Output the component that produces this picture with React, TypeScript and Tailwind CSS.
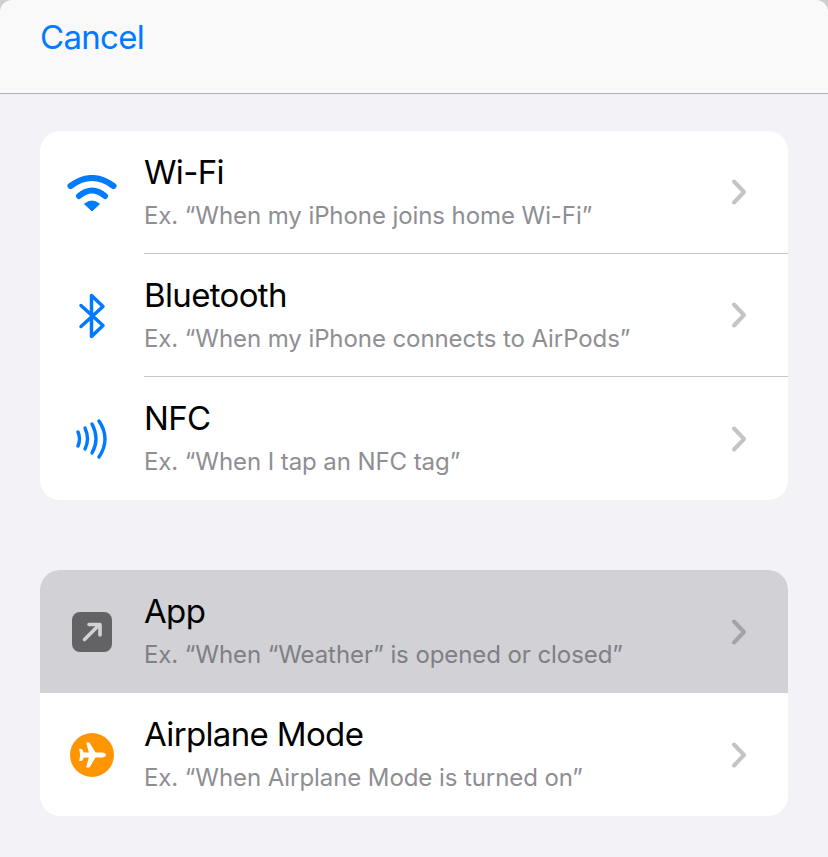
import type { ReactNode } from "react";

const sans = "font-['Inter','Liberation_Sans',sans-serif]";

function WifiIcon() {
  return (
    <svg width="50" height="36" viewBox="0 0 50 36" fill="none" className="block">
      <path d="M3.5 11Q25 -5 46.5 11" stroke="#007aff" strokeWidth="6" strokeLinecap="round" />
      <path d="M12 21Q25 10 38 21" stroke="#007aff" strokeWidth="6" strokeLinecap="round" />
      <path d="M25 36L17.5 29Q25 23 32.500 29Z" fill="#007aff" stroke="#007aff" strokeWidth="1" strokeLinejoin="round" />
    </svg>
  );
}

function BluetoothIcon() {
  return (
    <svg width="28" height="46" viewBox="0 0 28 46" fill="none" className="block">
      <path
        d="M3 33.500L25 13.500L13.500 2.500V43.500L25 32.500L3 12.500"
        stroke="#007aff"
        strokeWidth="3.5"
        strokeLinecap="round"
        strokeLinejoin="round"
      />
    </svg>
  );
}

function NfcIcon() {
  return (
    <svg width="32" height="40" viewBox="0 0 32 40" fill="none" className="block">
      <path d="M2 13Q5 20 2 27" stroke="#007aff" strokeWidth="3.4" strokeLinecap="round" />
      <path d="M9 9Q14 20 9 30" stroke="#007aff" strokeWidth="3.4" strokeLinecap="round" />
      <path d="M16 5Q24 20 16 34" stroke="#007aff" strokeWidth="3.4" strokeLinecap="round" />
      <path d="M23 2Q35 20 23 38" stroke="#007aff" strokeWidth="3.4" strokeLinecap="round" />
    </svg>
  );
}

function AppIcon() {
  return (
    <div className="flex h-10 w-10 items-center justify-center rounded-lg bg-[#636366]">
      <svg width="40" height="40" viewBox="0 0 40 40" fill="none" className="block">
        <path d="M12.500 27.500L27 13" stroke="#d1d1d6" strokeWidth="3.6" strokeLinecap="round" />
        <path d="M17 12.500H28V23" stroke="#d1d1d6" strokeWidth="3.6" strokeLinecap="round" strokeLinejoin="round" />
      </svg>
    </div>
  );
}

function PlaneIcon() {
  return (
    <div className="flex h-11 w-11 items-center justify-center rounded-full bg-[#ff9500]">
      <svg width="44" height="44" viewBox="0 0 44 44" className="block">
        <path
          d="M36 22C36 20.500 34 19.500 32 19.500H25.500L19.500 9.500H16.200L18.800 19.500H14L11.800 16H9.200L10.200 22L9.200 28H11.800L14 24.500H18.800L16.200 34.500H19.500L25.500 24.500H32C34 24.500 36 23.500 36 22Z"
          fill="#ffffff"
        />
      </svg>
    </div>
  );
}

function Chevron({ pressed }: { pressed?: boolean }) {
  return (
    <svg width="18" height="28" viewBox="0 0 18 28" fill="none" className="block">
      <path
        d="M4 3.500L14 14L4 24.500"
        stroke={pressed ? "#a3a3a8" : "#c4c4c7"}
        strokeWidth="4"
        strokeLinecap="round"
        strokeLinejoin="round"
      />
    </svg>
  );
}

type Row = { icon: ReactNode; title: string; sub: string; pressed?: boolean };

const triggers: Row[] = [
  { icon: <WifiIcon />, title: "Wi-Fi", sub: "Ex. “When my iPhone joins home Wi-Fi”" },
  { icon: <BluetoothIcon />, title: "Bluetooth", sub: "Ex. “When my iPhone connects to AirPods”" },
  { icon: <NfcIcon />, title: "NFC", sub: "Ex. “When I tap an NFC tag”" },
];

const appTriggers: Row[] = [
  { icon: <AppIcon />, title: "App", sub: "Ex. “When “Weather” is opened or closed”", pressed: true },
  { icon: <PlaneIcon />, title: "Airplane Mode", sub: "Ex. “When Airplane Mode is turned on”" },
];

function Group({ rows }: { rows: Row[] }) {
  return (
    <div className="mx-10 overflow-hidden rounded-[20px] bg-white">
      {rows.map((row, i) => (
        <div key={row.title} className={`flex h-[123px] items-center ${row.pressed ? "bg-[#d1d1d6]" : ""}`}>
          <div className="flex w-[104px] shrink-0 items-center justify-center">{row.icon}</div>
          <div className={`flex h-full min-w-0 flex-1 items-center pr-[40px] ${i < rows.length - 1 && !row.pressed ? "border-b border-[#c6c6c8]" : ""}`}>
            <div className="min-w-0 flex-1 pt-[3px]">
              <div className="text-[33px] leading-[44px] tracking-[-0.65px] text-black">{row.title}</div>
              <div className={`text-[24px] leading-[44px] tracking-[-0.08px] ${row.pressed ? "text-[#7f7f85]" : "text-[#8e8e93]"}`}>{row.sub}</div>
            </div>
            <Chevron pressed={row.pressed} />
          </div>
        </div>
      ))}
    </div>
  );
}

export default function App() {
  return (
    <div className={`h-[857px] overflow-hidden bg-[#f2f2f7] ${sans}`}>
      <div className="bg-[#cfcfcf]">
        <div className="flex h-[94px] items-start rounded-t-[12px] border-b border-[#b2b2b4] bg-[#f9f9f9] px-10 pt-[14px]">
          <span className="text-[33px] leading-[46px] tracking-[-0.7px] text-[#007aff]">Cancel</span>
        </div>
      </div>
      <div className="flex flex-col gap-[70px] pt-[37px]">
        <Group rows={triggers} />
        <Group rows={appTriggers} />
      </div>
    </div>
  );
}
